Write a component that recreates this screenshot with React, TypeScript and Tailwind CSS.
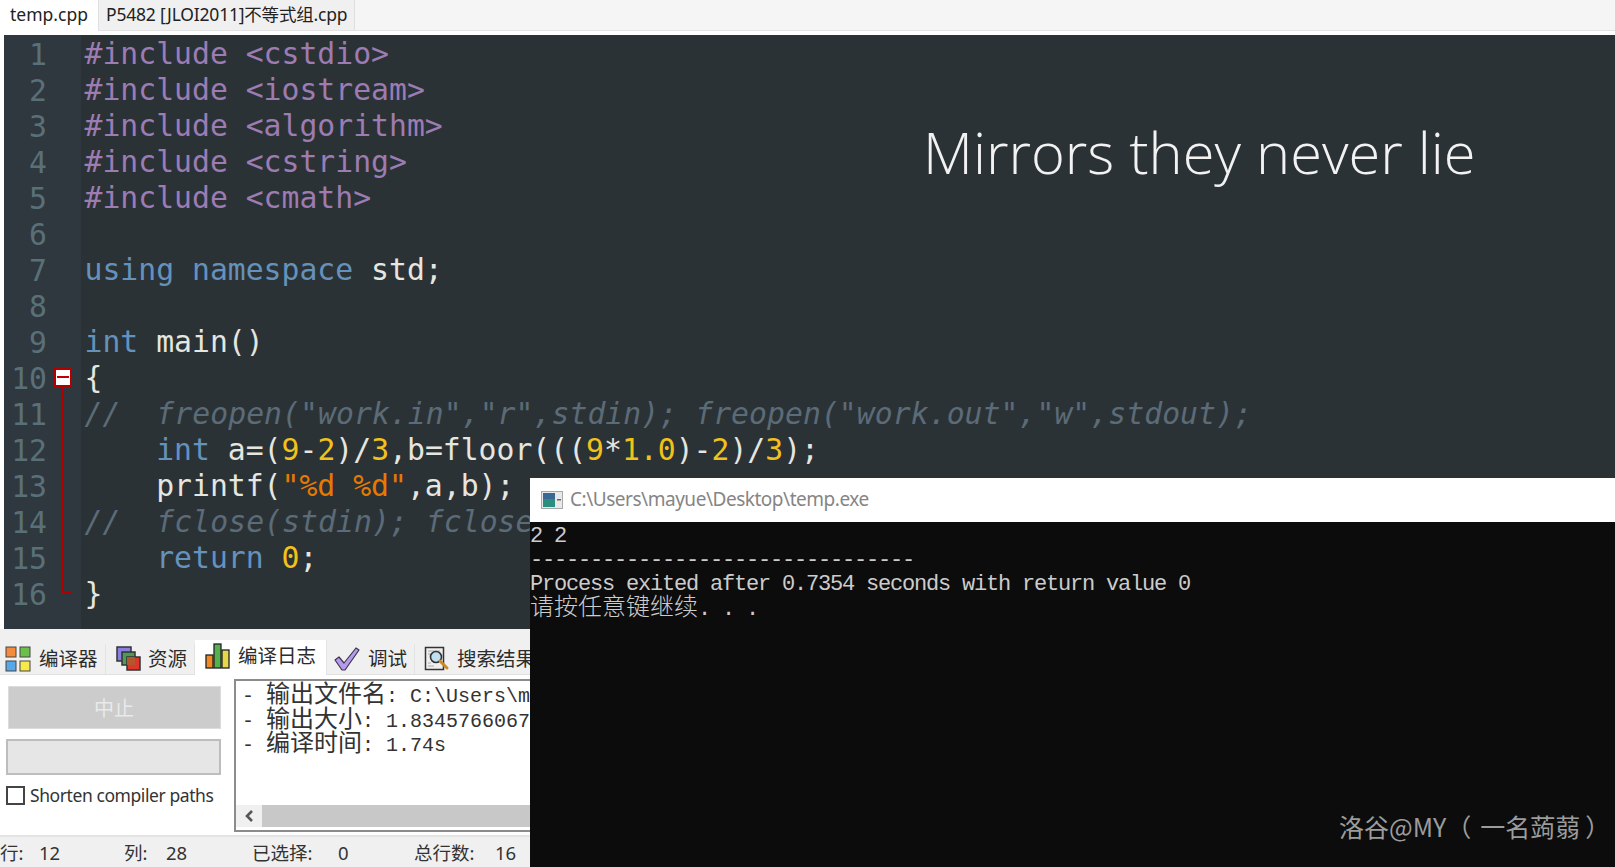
import React from 'react';

const mono = "font-['DejaVu_Sans_Mono','Liberation_Mono',monospace]";

const PP = 'text-[#9c7cb2]';
const KW = 'text-[#6592bd]';
const NUM = 'text-[#f2c21a]';
const STR = 'text-[#e67a00]';
const COM = 'text-[#5b6b77] italic tracking-[0.05px]';
const PLAIN = 'text-[#e6e6e0]';

type Tok = [string, string?];

const lines: Tok[][] = [
  [['#include <cstdio>', PP]],
  [['#include <iostream>', PP]],
  [['#include <algorithm>', PP]],
  [['#include <cstring>', PP]],
  [['#include <cmath>', PP]],
  [],
  [['using namespace', KW], [' std;']],
  [],
  [['int', KW], [' main()']],
  [['{']],
  [['//  freopen("work.in","r",stdin); freopen("work.out","w",stdout);', COM]],
  [['    '], ['int', KW], [' a=('], ['9', NUM], ['-'], ['2', NUM], [')/'], ['3', NUM], [',b=floor((('], ['9', NUM], ['*'], ['1.0', NUM], [')-'], ['2', NUM], [')/'], ['3', NUM], [');']],
  [['    printf('], ['"%d %d"', STR], [',a,b);']],
  [['//  fclose(stdin); fclose(stdout);', COM]],
  [['    '], ['return', KW], [' '], ['0', NUM], [';']],
  [['}']],
];

const FoldMark = ({ line }: { line: number }) => {
  if (line === 10) {
    return (
      <div className="relative flex h-full w-[18px] flex-col items-center justify-center">
        <div className="z-10 flex h-[19px] w-[18px] items-center justify-center border-2 border-[#b00000] bg-white">
          <div className="h-[2px] w-[12px] bg-[#c00000]" />
        </div>
        <div className="absolute bottom-0 left-[8px] h-[9px] w-[2px] bg-[#b00000]" />
      </div>
    );
  }
  if (line > 10 && line < 16) {
    return (
      <div className="flex h-full w-[18px] justify-center">
        <div className="h-full w-[2px] bg-[#b00000]" />
      </div>
    );
  }
  if (line === 16) {
    return (
      <div className="h-[19px] w-[18px] self-start pl-[8px]">
        <div className="h-full w-[10px] border-b-2 border-l-2 border-[#b00000]" />
      </div>
    );
  }
  return <div className="w-[18px]" />;
};

const GridIcon = () => (
  <svg width="26" height="26" viewBox="0 0 26 26">
    <rect x="1" y="1" width="10" height="10" fill="#f58a3c" stroke="#444" />
    <rect x="15" y="1" width="10" height="10" fill="#6cc04a" stroke="#444" />
    <rect x="1" y="15" width="10" height="10" fill="#5aa7e6" stroke="#444" />
    <rect x="15" y="15" width="10" height="10" fill="#f6ea4a" stroke="#444" />
  </svg>
);

const LayersIcon = () => (
  <svg width="26" height="26" viewBox="0 0 26 26">
    <rect x="1" y="1" width="14" height="14" fill="#8a7fe0" stroke="#333" strokeWidth="1.5" />
    <rect x="6" y="6" width="13" height="13" fill="#4f9a55" stroke="#333" strokeWidth="1.5" />
    <rect x="11" y="11" width="13" height="13" fill="#e0352b" stroke="#333" strokeWidth="1.5" />
    <rect x="11" y="11" width="8" height="8" fill="#b5562c" />
  </svg>
);

const BarsIcon = () => (
  <svg width="26" height="28" viewBox="0 0 26 28">
    <rect x="1" y="13" width="7" height="13" fill="#f08a24" stroke="#222" strokeWidth="1.3" />
    <rect x="9" y="2" width="7" height="24" fill="#55b04e" stroke="#222" strokeWidth="1.3" />
    <rect x="17" y="8" width="7" height="18" fill="#e6d84a" stroke="#222" strokeWidth="1.3" />
  </svg>
);

const CheckIcon = () => (
  <svg width="26" height="26" viewBox="0 0 26 26">
    <path d="M1 14 L5 11 L10 17 L22 2 L25 4 L11 24 L8 24 Z" fill="#b79be8" stroke="#3d3550" strokeWidth="1.2" strokeLinejoin="round" />
  </svg>
);

const SearchIcon = () => (
  <svg width="26" height="26" viewBox="0 0 26 26">
    <rect x="1.5" y="1.5" width="18" height="22" fill="#efefef" stroke="#333" strokeWidth="1.5" />
    <path d="M4 20h6M4 17h3M4 5h12M4 8h5" stroke="#aaa" strokeWidth="1" />
    <circle cx="12" cy="11" r="5.5" fill="#bfe0f2" stroke="#333" strokeWidth="1.6" />
    <path d="M16 15 L23 22" stroke="#c98a2a" strokeWidth="3" strokeLinecap="round" />
  </svg>
);

const ConsoleIcon = () => (
  <svg width="22" height="18" viewBox="0 0 22 18">
    <rect x="0.5" y="0.5" width="21" height="17" fill="#e8e8e8" stroke="#a8a8a8" />
    <rect x="2" y="2" width="12" height="14" fill="#2a8f7e" />
    <rect x="2" y="2" width="12" height="6" fill="#3a6a94" />
    <rect x="16" y="8" width="4" height="1.5" fill="#666" />
  </svg>
);

const tabs = [
  { label: '编译器', icon: <GridIcon />, w: 'w-[106px]', pl: 'pl-[5px]', gap: 'gap-[8px]' },
  { label: '资源', icon: <LayersIcon />, w: 'w-[89px]', pl: 'pl-[10px]', gap: 'gap-[6px]' },
  { label: '编译日志', icon: <BarsIcon />, w: 'w-[132px]', pl: 'pl-[10px]', gap: 'gap-[7px]', active: true },
  { label: '调试', icon: <CheckIcon />, w: 'w-[88px]', pl: 'pl-[7px]', gap: 'gap-[8px]' },
  { label: '搜索结果', icon: <SearchIcon />, w: 'w-[140px]', pl: 'pl-[9px]', gap: 'gap-[7px]' },
];

export default function App() {
  return (
    <div className="relative flex h-screen w-screen flex-col overflow-hidden bg-white font-['Noto_Sans','Noto_Sans_CJK_SC',sans-serif]">
      {/* file tabs */}
      <div className="flex h-[31px] shrink-0 border-b border-[#e3e3e3] bg-[#f5f5f5] text-[17.5px] leading-[28px] text-[#222]">
        <div className="h-[31px] w-[98px] bg-white pl-[10px]">temp.cpp</div>
        <div className="w-[257px] border-x border-[#dfdfdf] bg-[#f0f0f0] pl-[7px] tracking-[-0.2px]">P5482 [JLOI2011]不等式组.cpp</div>
      </div>
      <div className="h-[4px] shrink-0 bg-white" />

      {/* editor */}
      <div className={`ml-[4px] flex h-[594px] shrink-0 flex-col bg-[#2b3236] ${mono} text-[29.75px] leading-[36px]`}>
        {lines.map((toks, i) => (
          <div key={i} className="flex h-[36px] shrink-0">
            <div className="flex h-[36px] w-[77px] shrink-0 items-center bg-[#2f383e]">
              <span className="w-[43px] pt-[3px] text-right text-[#5a7079]">{i + 1}</span>
              <span className="w-[7px]" />
              <FoldMark line={i + 1} />
            </div>
            <div className="whitespace-pre pl-[3.5px] pt-[1px]">
              {toks.map((t, j) => (
                <span key={j} className={t[1] ?? PLAIN}>{t[0]}</span>
              ))}
            </div>
          </div>
        ))}
        <div className="flex grow">
          <div className="w-[77px] bg-[#2f383e]" />
        </div>
      </div>

      {/* bottom panel */}
      <div className="flex grow flex-col bg-[#f0f0f0]">
        <div className="h-[12px] shrink-0" />
        <div className="flex h-[34px] shrink-0 items-end border-b border-[#e0e0e0]">
          {tabs.map((t) => (
            <div
              key={t.label}
              className={`flex items-center border-r border-[#e4e4e4] ${t.gap} ${t.w} ${t.pl} ${
                t.active ? 'z-10 -mb-px h-[35px] bg-white pb-[4px]' : 'h-[30px] bg-[#f0f0f0]'
              }`}
            >
              {t.icon}
              <span className="whitespace-nowrap text-[19.5px] leading-none text-[#2c2c2c]">{t.label}</span>
            </div>
          ))}
        </div>

        <div className="flex h-[160px] shrink-0 bg-white">
          <div className="flex w-[234px] shrink-0 flex-col pl-[6px] pt-[11px]">
            <div className="ml-[1.5px] flex h-[43px] w-[213px] items-center justify-center border border-[#dcdcdc] bg-[#cccccc] pt-[2px] text-[20px] text-[#e9e9e9]">中止</div>
            <div className="mt-[10px] h-[36px] w-[215px] border-2 border-[#bdbdbd] bg-[#e6e6e6]" />
            <div className="mt-[11px] flex items-center gap-[5px]">
              <div className="h-[19px] w-[19px] border-2 border-[#444] bg-white" />
              <span className="text-[17.5px] leading-none tracking-[-0.42px] text-[#333]">Shorten compiler paths</span>
            </div>
          </div>
          <div className="mt-[4px] flex h-[153px] grow flex-col border-2 border-[#8c8c8c] bg-white pb-[3px]">
            <div className="grow whitespace-pre pl-[6px] pt-[3px] font-['Liberation_Mono','Noto_Sans_CJK_SC',monospace] text-[20px] leading-[24px] text-[#333]">
              <div className="h-[24.5px]">- <span className="text-[24px] leading-[24px]">输出文件名</span>: C:\Users\mayue\Desktop\temp.exe</div>
              <div className="h-[24.5px]">- <span className="text-[24px] leading-[24px]">输出大小</span>: 1.83457660675049 MiB</div>
              <div className="h-[24.5px]">- <span className="text-[24px] leading-[24px]">编译时间</span>: 1.74s</div>
            </div>
            <div className="flex h-[22px] shrink-0">
              <div className="flex w-[26px] items-center justify-center bg-[#f0f0f0]">
                <svg width="12" height="14" viewBox="0 0 12 14">
                  <path d="M9 2 L4 7 L9 12" fill="none" stroke="#555" strokeWidth="2.6" />
                </svg>
              </div>
              <div className="grow bg-[#c8c8c8]" />
            </div>
          </div>
        </div>

        {/* status bar */}
        <div className="flex grow items-center border-t-2 border-[#e4e4e4] pt-[2px] text-[18.5px] leading-none text-[#333]">
          <span className="w-[39px] shrink-0">行:</span>
          <span className="w-[85px] shrink-0">12</span>
          <span className="w-[42px] shrink-0">列:</span>
          <span className="w-[86px] shrink-0">28</span>
          <span className="w-[86px] shrink-0">已选择:</span>
          <span className="w-[76px] shrink-0">0</span>
          <span className="w-[81px] shrink-0">总行数:</span>
          <span className="shrink-0">16</span>
        </div>
      </div>

      {/* overlay caption */}
      <div className="absolute left-[923px] top-[113px] font-['Open_Sans',sans-serif] text-[57.8px] font-light leading-[78px] text-[#f2f2f2]">
        Mirrors they never lie
      </div>

      {/* console window */}
      <div className="absolute bottom-0 left-[530px] right-0 top-[478px] flex flex-col">
        <div className="flex h-[44px] shrink-0 items-center gap-[7px] bg-white pb-[1px] pl-[11px] text-[19px] tracking-[-0.47px] text-[#858585]">
          <ConsoleIcon />
          <span>C:\Users\mayue\Desktop\temp.exe</span>
        </div>
        <div className="grow whitespace-pre bg-[#0c0c0c] pt-[3px] font-['Liberation_Mono','Noto_Sans_CJK_SC',monospace] text-[22px] leading-[24px] tracking-[-1.2px] text-[#cccccc]">
          <div>2 2</div>
          <div>--------------------------------</div>
          <div>Process exited after 0.7354 seconds with return value 0</div>
          <div>
            <span className="text-[24px] font-light tracking-normal">请按任意键继续</span>. . .
          </div>
        </div>
      </div>

      {/* watermark */}
      <div className="absolute left-[1339px] top-[808px] whitespace-nowrap font-['Noto_Sans_CJK_SC','Noto_Sans',sans-serif] text-[25px] leading-[36px] text-[#9c9c9c]">
        洛谷@MY（<span className="ml-[9px]">一名蒟蒻</span><span className="ml-[5px]">）</span>
      </div>
    </div>
  );
}
